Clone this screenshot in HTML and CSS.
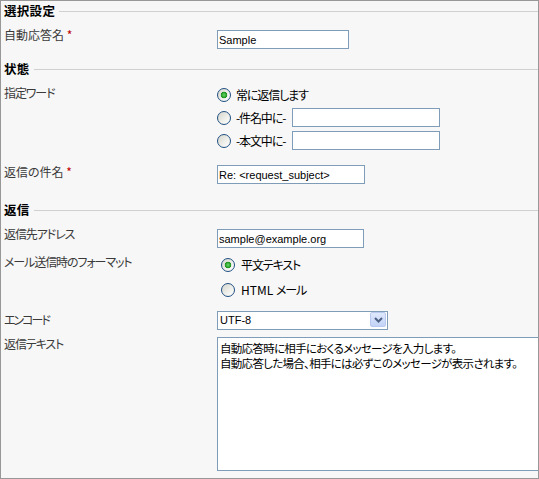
FILE: index.html
```html
<!DOCTYPE html>
<html lang="ja">
<head>
<meta charset="utf-8">
<title>自動応答設定</title>
<link rel="stylesheet" href="styles.css">
</head>
<body>
<div class="frame">
  <div class="section-title">選択設定</div>
  <div class="row row-name">
    <div class="label">自動応答名 <span class="req">*</span></div>
    <div class="control"><input class="text w131" type="text" value="Sample"></div>
  </div>

  <div class="section-title sec-state">状態</div>
  <div class="row row-word">
    <div class="label lb-word kana">指定ワード</div>
    <div class="control options">
      <label class="opt"><input class="radio" type="radio" name="w" checked><span class="kana">常に返信します</span></label>
      <label class="opt"><input class="radio" type="radio" name="w"><span class="kana">-件名中に-</span><input class="text w148" type="text"></label>
      <label class="opt"><input class="radio" type="radio" name="w"><span class="kana">-本文中に-</span><input class="text w148" type="text"></label>
    </div>
  </div>
  <div class="row row-subject">
    <div class="label lb-subject">返信の件名 <span class="req">*</span></div>
    <div class="control"><input class="text w148" type="text" value="Re: <request_subject>"></div>
  </div>

  <div class="section-title sec-reply">返信</div>
  <div class="row row-addr">
    <div class="label kana">返信先アドレス</div>
    <div class="control"><input class="text w147" type="text" value="sample@example.org"></div>
  </div>
  <div class="row row-format">
    <div class="label lb-format kana">メール送信時のフォーマット</div>
    <div class="control options fmt">
      <label class="opt"><input class="radio" type="radio" name="f" checked><span class="kana">平文テキスト</span></label>
      <label class="opt"><input class="radio" type="radio" name="f"><span>HTML <span class="kana">メール</span></span></label>
    </div>
  </div>
  <div class="row row-enc">
    <div class="label lb-enc kana-wide">エンコード</div>
    <div class="control">
      <div class="select-wrap">
        <select class="select"><option>UTF-8</option></select>
        <span class="select-btn"><svg width="9" height="6" viewBox="0 0 9 6"><path d="M1 1 L4.5 4.5 L8 1" fill="none" stroke="#4d6185" stroke-width="2"/></svg></span>
      </div>
    </div>
  </div>
  <div class="row row-body">
    <div class="label lb-body kana">返信テキスト</div>
    <div class="control"><textarea class="area">自動応答時に相手におくるメッセージを入力します。
自動応答した場合、相手には必ずこのメッセージが表示されます。</textarea></div>
  </div>
</div>
</body>
</html>
```

FILE: styles.css
```css
html, body {
  margin: 0;
  padding: 0;
  background: #ffffff;
}

.frame {
  box-sizing: border-box;
  width: 539px;
  height: 479px;
  border: 1px solid #989898;
  background: #f7f7f7;
  padding: 3px 0 0 3px;
  overflow: hidden;
  font-family: "Noto Sans CJK JP", "Liberation Sans", sans-serif;
  font-size: 12px;
  font-feature-settings: "palt";
  color: #3a3a3a;
}

.section-title {
  display: flex;
  align-items: center;
  height: 14px;
  line-height: 14px;
  font-weight: bold;
  font-size: 12.5px;
  color: #000;
  letter-spacing: 0.3px;
}

.section-title::after {
  content: "";
  flex: 1;
  height: 1px;
  margin-left: 4px;
  background: #d0d0d0;
}

.sec-state { margin-top: 13px; }
.sec-reply { margin-top: 19px; }

.row {
  display: flex;
  align-items: flex-start;
}

.label {
  width: 213px;
  flex: none;
  line-height: 14px;
  margin-top: -2px;
  white-space: nowrap;
}

.kana {
  letter-spacing: -1.1px;
}

.kana-wide {
  letter-spacing: -2px;
}

.req {
  color: #c00000;
  letter-spacing: 0;
}

.control {
  display: flex;
  flex-direction: column;
}

.row-name { margin-top: 12px; }
.row-word { margin-top: 9px; }
.row-subject { margin-top: 15px; }
.row-addr { margin-top: 12px; }
.row-format { margin-top: 7px; }
.row-enc { margin-top: 11px; }
.row-body { margin-top: 8px; }

.lb-word { margin-top: 1px; }
.lb-subject { margin-top: 0; }
.lb-format { margin-top: 0; }
.lb-enc { margin-top: 3px; }
.lb-body { margin-top: 0; }

.text {
  box-sizing: border-box;
  height: 19px;
  margin: 0;
  padding: 0 1px;
  border: 1px solid #7f9db9;
  background: #fff;
  font-family: "Liberation Sans", sans-serif;
  font-size: 11px;
  color: #000;
  outline: none;
}

.w131 { width: 132px; }
.w147 { width: 147px; }
.w148 { width: 148px; }

.options {
  gap: 4px;
}

.options.fmt {
  gap: 6px;
  padding-left: 4px;
}

.opt {
  display: flex;
  align-items: center;
  height: 19px;
  gap: 5px;
  color: #000;
  white-space: nowrap;
}

.fmt .opt {
  gap: 6px;
}

.opt .text {
  margin-left: 2px;
}

.radio {
  appearance: none;
  -webkit-appearance: none;
  box-sizing: border-box;
  width: 14px;
  height: 14px;
  margin: 0;
  border: 1px solid #1f4f82;
  border-radius: 50%;
  background: linear-gradient(135deg, #d6d6ce 0%, #eeeeea 55%, #ffffff 100%);
  flex: none;
}

.radio:checked {
  background:
    radial-gradient(circle at 50% 50%, #6ad86a 0, #2ea62e 2.2px, #1f8f1f 3px, rgba(0,0,0,0) 3.6px),
    linear-gradient(135deg, #d6d6ce 0%, #eeeeea 55%, #ffffff 100%);
}

.select-wrap {
  position: relative;
  width: 171px;
  height: 19px;
}

.select {
  appearance: none;
  -webkit-appearance: none;
  box-sizing: border-box;
  width: 171px;
  height: 19px;
  margin: 0;
  padding: 0 2px;
  border: 1px solid #7f9db9;
  border-radius: 0;
  background: #fff;
  font-family: "Liberation Sans", sans-serif;
  font-size: 11px;
  color: #000;
  outline: none;
}

.select-btn {
  position: absolute;
  top: 2px;
  right: 2px;
  width: 16px;
  height: 15px;
  box-sizing: border-box;
  border: 1px solid #b9c9ef;
  border-radius: 2px;
  background: linear-gradient(180deg, #dfe8fc 0%, #c3d3f7 100%);
  display: flex;
  align-items: center;
  justify-content: center;
  pointer-events: none;
}

.area {
  box-sizing: border-box;
  width: 340px;
  height: 134px;
  margin: 0;
  padding: 3px 2px;
  border: 1px solid #7f9db9;
  background: #fff;
  resize: none;
  font-family: "Noto Sans CJK JP", "Liberation Sans", sans-serif;
  font-feature-settings: "palt";
  font-size: 11.5px;
  letter-spacing: -0.7px;
  line-height: 15px;
  color: #000;
  outline: none;
  overflow: hidden;
}
```
